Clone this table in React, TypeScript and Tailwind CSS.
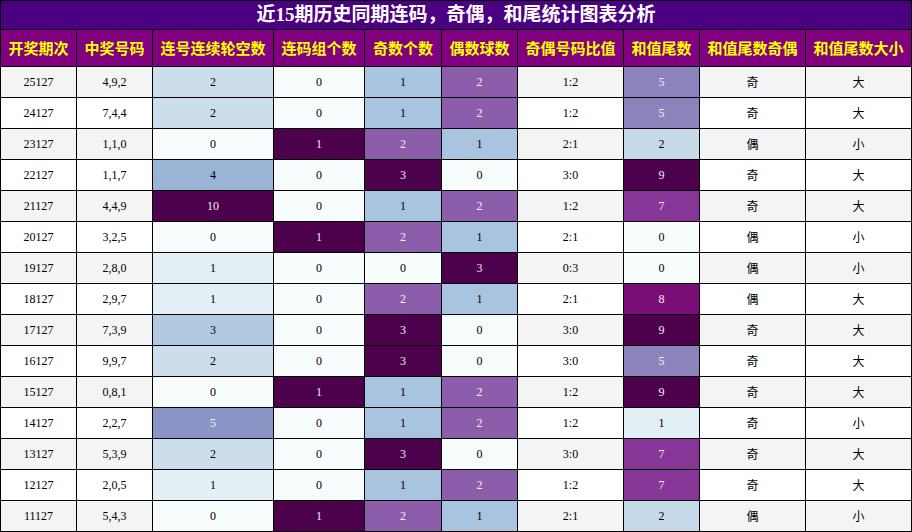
import React from "react";

type Row = {
  id: string;
  nums: string;
  a: number; // 连号连续轮空数
  b: number; // 连码组个数
  odd: number;
  even: number;
  ratio: string;
  tail: number;
  oe: string;
  bs: string;
};

const rows: Row[] = [
  { id: "25127", nums: "4,9,2", a: 2, b: 0, odd: 1, even: 2, ratio: "1:2", tail: 5, oe: "奇", bs: "大" },
  { id: "24127", nums: "7,4,4", a: 2, b: 0, odd: 1, even: 2, ratio: "1:2", tail: 5, oe: "奇", bs: "大" },
  { id: "23127", nums: "1,1,0", a: 0, b: 1, odd: 2, even: 1, ratio: "2:1", tail: 2, oe: "偶", bs: "小" },
  { id: "22127", nums: "1,1,7", a: 4, b: 0, odd: 3, even: 0, ratio: "3:0", tail: 9, oe: "奇", bs: "大" },
  { id: "21127", nums: "4,4,9", a: 10, b: 0, odd: 1, even: 2, ratio: "1:2", tail: 7, oe: "奇", bs: "大" },
  { id: "20127", nums: "3,2,5", a: 0, b: 1, odd: 2, even: 1, ratio: "2:1", tail: 0, oe: "偶", bs: "小" },
  { id: "19127", nums: "2,8,0", a: 1, b: 0, odd: 0, even: 3, ratio: "0:3", tail: 0, oe: "偶", bs: "小" },
  { id: "18127", nums: "2,9,7", a: 1, b: 0, odd: 2, even: 1, ratio: "2:1", tail: 8, oe: "偶", bs: "大" },
  { id: "17127", nums: "7,3,9", a: 3, b: 0, odd: 3, even: 0, ratio: "3:0", tail: 9, oe: "奇", bs: "大" },
  { id: "16127", nums: "9,9,7", a: 2, b: 0, odd: 3, even: 0, ratio: "3:0", tail: 5, oe: "奇", bs: "大" },
  { id: "15127", nums: "0,8,1", a: 0, b: 1, odd: 1, even: 2, ratio: "1:2", tail: 9, oe: "奇", bs: "大" },
  { id: "14127", nums: "2,2,7", a: 5, b: 0, odd: 1, even: 2, ratio: "1:2", tail: 1, oe: "奇", bs: "小" },
  { id: "13127", nums: "5,3,9", a: 2, b: 0, odd: 3, even: 0, ratio: "3:0", tail: 7, oe: "奇", bs: "大" },
  { id: "12127", nums: "2,0,5", a: 1, b: 0, odd: 1, even: 2, ratio: "1:2", tail: 7, oe: "奇", bs: "大" },
  { id: "11127", nums: "5,4,3", a: 0, b: 1, odd: 2, even: 1, ratio: "2:1", tail: 2, oe: "偶", bs: "小" },
];

const stops = ["#f7fcfd", "#e0ecf4", "#bfd3e6", "#9ebcda", "#8c96c6", "#8c6bb1", "#88419d", "#810f7c", "#4d004b"];

function hex(c: string) {
  return [parseInt(c.slice(1, 3), 16), parseInt(c.slice(3, 5), 16), parseInt(c.slice(5, 7), 16)];
}

function bupu(t: number) {
  const x = Math.max(0, Math.min(1, t)) * (stops.length - 1);
  const i = Math.min(stops.length - 2, Math.floor(x));
  const f = x - i;
  const a = hex(stops[i]);
  const b = hex(stops[i + 1]);
  const rgb = a.map((v, k) => v + (b[k] - v) * f);
  const lin = rgb.map((v) => {
    const s = v / 255;
    return s <= 0.03928 ? s / 12.92 : Math.pow((s + 0.055) / 1.055, 2.4);
  });
  const lum = 0.2126 * lin[0] + 0.7152 * lin[1] + 0.0722 * lin[2];
  return {
    bg: `rgb(${Math.round(rgb[0])},${Math.round(rgb[1])},${Math.round(rgb[2])})`,
    fg: lum < 0.408 ? "#f1f1f1" : "#000000",
  };
}

const headers = ["开奖期次", "中奖号码", "连号连续轮空数", "连码组个数", "奇数个数", "偶数球数", "奇偶号码比值", "和值尾数", "和值尾数奇偶", "和值尾数大小"];

const serif = "font-['Liberation_Serif','Noto_Sans_CJK_SC',serif]";

function Grad({ v, max }: { v: number; max: number }) {
  const c = bupu(v / max);
  return (
    <div
      className={`flex items-center justify-center text-[12px] ${serif}`}
      style={{ backgroundColor: c.bg, color: c.fg }}
    >
      {v}
    </div>
  );
}

export default function App() {
  return (
    <div className="w-[912px] h-[532px] bg-black p-px grid gap-px grid-cols-[75px_75px_120px_90px_76px_75px_105px_75px_105px_105px] grid-rows-[28px_36px_repeat(15,30px)]">
      <div className={`col-span-10 bg-[#4b0082] text-white font-bold text-[19px] flex items-center justify-center ${serif}`}>
        近15期历史同期连码，奇偶，和尾统计图表分析
      </div>
      {headers.map((h) => (
        <div
          key={h}
          className="bg-[#800080] text-[#ffff00] font-bold text-[15px] flex items-center justify-center font-['Noto_Sans_CJK_SC',sans-serif]"
        >
          {h}
        </div>
      ))}
      {rows.map((r, i) => {
        const rowBg = i % 2 === 0 ? "bg-[#f4f4f4]" : "bg-white";
        const plain = `${rowBg} flex items-center justify-center text-[12px] text-black ${serif}`;
        const cjk = `${rowBg} flex items-center justify-center text-[12px] text-black font-['Noto_Sans_CJK_SC',sans-serif]`;
        return (
          <React.Fragment key={r.id}>
            <div className={plain}>{r.id}</div>
            <div className={plain}>{r.nums}</div>
            <Grad v={r.a} max={10} />
            <Grad v={r.b} max={1} />
            <Grad v={r.odd} max={3} />
            <Grad v={r.even} max={3} />
            <div className={plain}>{r.ratio}</div>
            <Grad v={r.tail} max={9} />
            <div className={cjk}>{r.oe}</div>
            <div className={cjk}>{r.bs}</div>
          </React.Fragment>
        );
      })}
    </div>
  );
}
